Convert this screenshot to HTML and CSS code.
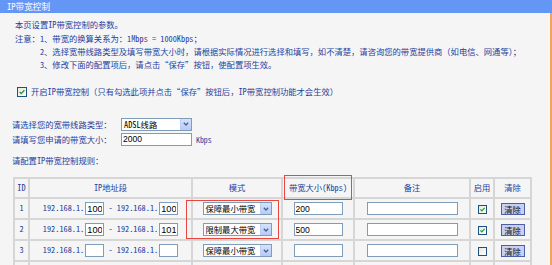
FILE: index.html
```html
<!doctype html>
<html lang="zh-CN">
  <head>
    <meta charset="UTF-8" />
    <title>IP带宽控制</title>
    <link rel="stylesheet" href="styles.css">
  </head>
  <body>
    <div class="panel">
      <div class="panel-title">IP带宽控制</div>
      <div class="panel-body">
        <div class="notes">
          <p>本页设置<span class="latin">IP</span>带宽控制的参数。</p>
          <div class="notice">
            <span class="notice-label">注意：</span>
            <ol>
              <li><span class="latin">1</span>、带宽的换算关系为：<span class="latin">1Mbps = 1000Kbps</span>；</li>
              <li><span class="latin">2</span>、选择宽带线路类型及填写带宽大小时，请根据实际情况进行选择和填写，如不清楚，请咨询您的带宽提供商（如电信、网通等）；</li>
              <li><span class="latin">3</span>、修改下面的配置项后，请点击“保存”按钮，使配置项生效。</li>
            </ol>
          </div>
        </div>

        <div class="enable-row">
          <span class="chk"><svg viewBox="0 0 8 8"><path d="M1.6 3.9 L3.3 5.6 L6.4 2.2" /></svg></span>
          <span>开启<span class="latin">IP</span>带宽控制（只有勾选此项并点击“保存”按钮后，<span class="latin">IP</span>带宽控制功能才会生效）</span>
        </div>

        <div class="settings">
          <span>请选择您的宽带线路类型：</span>
          <span class="select select-line">
            <span class="select-text">ADSL线路</span>
            <span class="select-btn"><svg viewBox="0 0 8 8"><path d="M1.8 2.8 L4 5 L6.2 2.8" /></svg></span>
          </span>
          <span></span>
          <span>请填写您申请的带宽大小：</span>
          <input class="field field-total" type="text" value="2000">
          <span class="unit latin">Kbps</span>
        </div>

        <div class="rules-title">请配置<span class="latin">IP</span>带宽控制规则：</div>

        <div class="rules">
          <table class="rule-table">
            <colgroup>
              <col style="width: 15px">
              <col style="width: 163px">
              <col style="width: 90px">
              <col style="width: 72px">
              <col style="width: 116px">
              <col style="width: 24px">
              <col style="width: 37px">
            </colgroup>
            <thead>
              <tr>
                <th>ID</th>
                <th>IP地址段</th>
                <th>模式</th>
                <th>带宽大小(Kbps)</th>
                <th>备注</th>
                <th>启用</th>
                <th>清除</th>
              </tr>
            </thead>
            <tbody>
              <tr>
                <td>1</td>
                <td>192.168.1.<input class="field field-ip" type="text" value="100"> - 192.168.1.<input class="field field-ip" type="text" value="100"></td>
                <td>
                  <span class="select select-mode">
                    <span class="select-text">保障最小带宽</span>
                    <span class="select-btn"><svg viewBox="0 0 8 8"><path d="M1.8 2.8 L4 5 L6.2 2.8" /></svg></span>
                  </span>
                </td>
                <td><input class="field field-bw" type="text" value="200"></td>
                <td><input class="field field-note" type="text" value=""></td>
                <td><span class="chk chk-small"><svg viewBox="0 0 8 8"><path d="M1.6 3.9 L3.3 5.6 L6.4 2.2" /></svg></span></td>
                <td><button class="clear-btn">清除</button></td>
              </tr>
              <tr>
                <td>2</td>
                <td>192.168.1.<input class="field field-ip" type="text" value="100"> - 192.168.1.<input class="field field-ip" type="text" value="101"></td>
                <td>
                  <span class="select select-mode">
                    <span class="select-text">限制最大带宽</span>
                    <span class="select-btn"><svg viewBox="0 0 8 8"><path d="M1.8 2.8 L4 5 L6.2 2.8" /></svg></span>
                  </span>
                </td>
                <td><input class="field field-bw" type="text" value="500"></td>
                <td><input class="field field-note" type="text" value=""></td>
                <td><span class="chk chk-small"><svg viewBox="0 0 8 8"><path d="M1.6 3.9 L3.3 5.6 L6.4 2.2" /></svg></span></td>
                <td><button class="clear-btn">清除</button></td>
              </tr>
              <tr>
                <td>3</td>
                <td>192.168.1.<input class="field field-ip" type="text" value=""> - 192.168.1.<input class="field field-ip" type="text" value=""></td>
                <td>
                  <span class="select select-mode">
                    <span class="select-text">保障最小带宽</span>
                    <span class="select-btn"><svg viewBox="0 0 8 8"><path d="M1.8 2.8 L4 5 L6.2 2.8" /></svg></span>
                  </span>
                </td>
                <td><input class="field field-bw" type="text" value=""></td>
                <td><input class="field field-note" type="text" value=""></td>
                <td><span class="chk chk-small chk-off"></span></td>
                <td><button class="clear-btn">清除</button></td>
              </tr>
              <!-- next row starts just below the visible area -->
              <tr class="row-next">
                <td></td>
                <td></td>
                <td></td>
                <td></td>
                <td></td>
                <td></td>
                <td></td>
              </tr>
            </tbody>
          </table>

          <!-- red highlight frames drawn over the table -->
          <div class="mark mark-mode"></div>
          <div class="mark mark-bw"></div>
        </div>
      </div>
    </div>
  </body>
</html>
```

FILE: styles.css
```css
:root {
  --color-title: #6496f5;
  --color-text: #1e3f9e;
  --color-bg: #f5f5f5;
  --color-line: #d6d6d6;
  --color-field: #7f9db9;
  --color-edge: #f0a55a;
  --color-mark: #e8463e;
  --font-ui: "Noto Sans CJK SC", "Noto Sans", sans-serif;
  --font-field: "Liberation Sans", "Noto Sans CJK SC", sans-serif;
}

html,
body {
  margin: 0;
  height: 100%;
  overflow: hidden;
}

body {
  background: var(--color-bg);
  font-family: var(--font-ui);
  font-size: 8.3px;
  line-height: 13.3px;
  color: var(--color-text);
}

/* half-width latin, like the old bitmap font */
.latin {
  font-feature-settings: "hwid";
}

.panel {
  display: flex;
  flex-direction: column;
  height: 100%;
}

.panel-title {
  height: 14px;
  line-height: 13px;
  padding-left: 7px;
  background: var(--color-title);
  color: #fff;
  font-size: 8.6px;
  font-feature-settings: "hwid";
}

.panel-body {
  flex: 1;
  padding: 5.3px 0 0 12px;
  border-right: 2px solid var(--color-edge);
}

.notes {
  padding-left: 3px;
  white-space: nowrap;
}

.notes p {
  margin: 0;
}

.notice {
  display: flex;
}

.notice ol {
  list-style: none;
  margin: 0;
  padding: 0;
}

.enable-row {
  display: flex;
  align-items: center;
  gap: 4px;
  height: 13.3px;
  margin-top: 13.8px;
  padding-left: 5px;
  white-space: nowrap;
}

/* xp style checkbox */
.chk {
  display: inline-flex;
  align-items: center;
  justify-content: center;
  box-sizing: border-box;
  width: 10px;
  height: 10px;
  border: 1px solid #1c5180;
  background: linear-gradient(135deg, #e6e6e0, #fff);
}

.chk svg {
  width: 8px;
  height: 8px;
}

.chk path {
  fill: none;
  stroke: #21a121;
  stroke-width: 1.4;
}

.chk-small {
  width: 9px;
  height: 9px;
  vertical-align: middle;
}

.chk-small svg {
  width: 7px;
  height: 7px;
}

.settings {
  display: grid;
  grid-template-columns: 105px max-content max-content;
  column-gap: 4px;
  row-gap: 2px;
  align-items: center;
  margin-top: 19.4px;
}

.settings > span {
  height: 13px;
  line-height: 13px;
}

.unit {
  font-size: 7.8px;
}

.field {
  box-sizing: border-box;
  height: 13px;
  margin: 0;
  padding: 0 1px;
  border: 1px solid var(--color-field);
  background: #fff;
  font-family: var(--font-field);
  font-size: 8.6px;
  color: #000;
  vertical-align: middle;
  outline: none;
}

.field-total {
  width: 71px;
}

.field-ip {
  width: 19px;
  margin: 0 0 0 1px;
  font-size: 9.2px;
}

.field-bw {
  width: 49px;
}

.field-note {
  width: 91px;
}

.select {
  display: inline-flex;
  box-sizing: border-box;
  height: 13px;
  border: 1px solid var(--color-field);
  background: #fff;
  color: #000;
  vertical-align: middle;
  text-align: left;
}

.select-text {
  flex: 1;
  padding-left: 2px;
  line-height: 11px;
  white-space: nowrap;
  overflow: hidden;
  font-feature-settings: "hwid";
}

.select-btn {
  display: flex;
  align-items: center;
  justify-content: center;
  width: 10px;
  margin: 0;
  border-left: 1px solid #b9cdf6;
  background: linear-gradient(#d5e2fd, #b7cbf7);
}

.select-btn svg {
  width: 8px;
  height: 8px;
}

.select-btn path {
  fill: none;
  stroke: #4d6185;
  stroke-width: 1.3;
}

.select-line {
  width: 71px;
}

.select-mode {
  width: 69px;
}

.rules-title {
  margin-top: 8.3px;
}

.rules {
  position: relative;
  width: fit-content;
  margin: 9px 0 0 1px;
}

.rule-table {
  border-collapse: collapse;
  table-layout: fixed;
  width: 517px;
  font-feature-settings: "hwid";
}

.rule-table th,
.rule-table td {
  border: 2px solid var(--color-line);
  padding: 0;
  text-align: center;
  font-weight: normal;
  white-space: nowrap;
  overflow: hidden;
}

.rule-table thead tr {
  height: 20px;
}

.rule-table tbody tr {
  height: 21px;
}

.clear-btn {
  box-sizing: border-box;
  width: 24px;
  height: 12px;
  margin: 0;
  padding: 0;
  border: 1px solid #4d5fa8;
  background: #c8cff3;
  font-family: var(--font-ui);
  font-size: 8.3px;
  line-height: 10px;
  color: #111;
  vertical-align: middle;
}

.mark {
  position: absolute;
  border: 1px solid var(--color-mark);
}

.mark-mode {
  left: 173px;
  top: 23.5px;
  width: 91px;
  height: 37px;
}

.mark-bw {
  left: 271px;
  top: -1.5px;
  width: 66px;
  height: 23px;
}
```
